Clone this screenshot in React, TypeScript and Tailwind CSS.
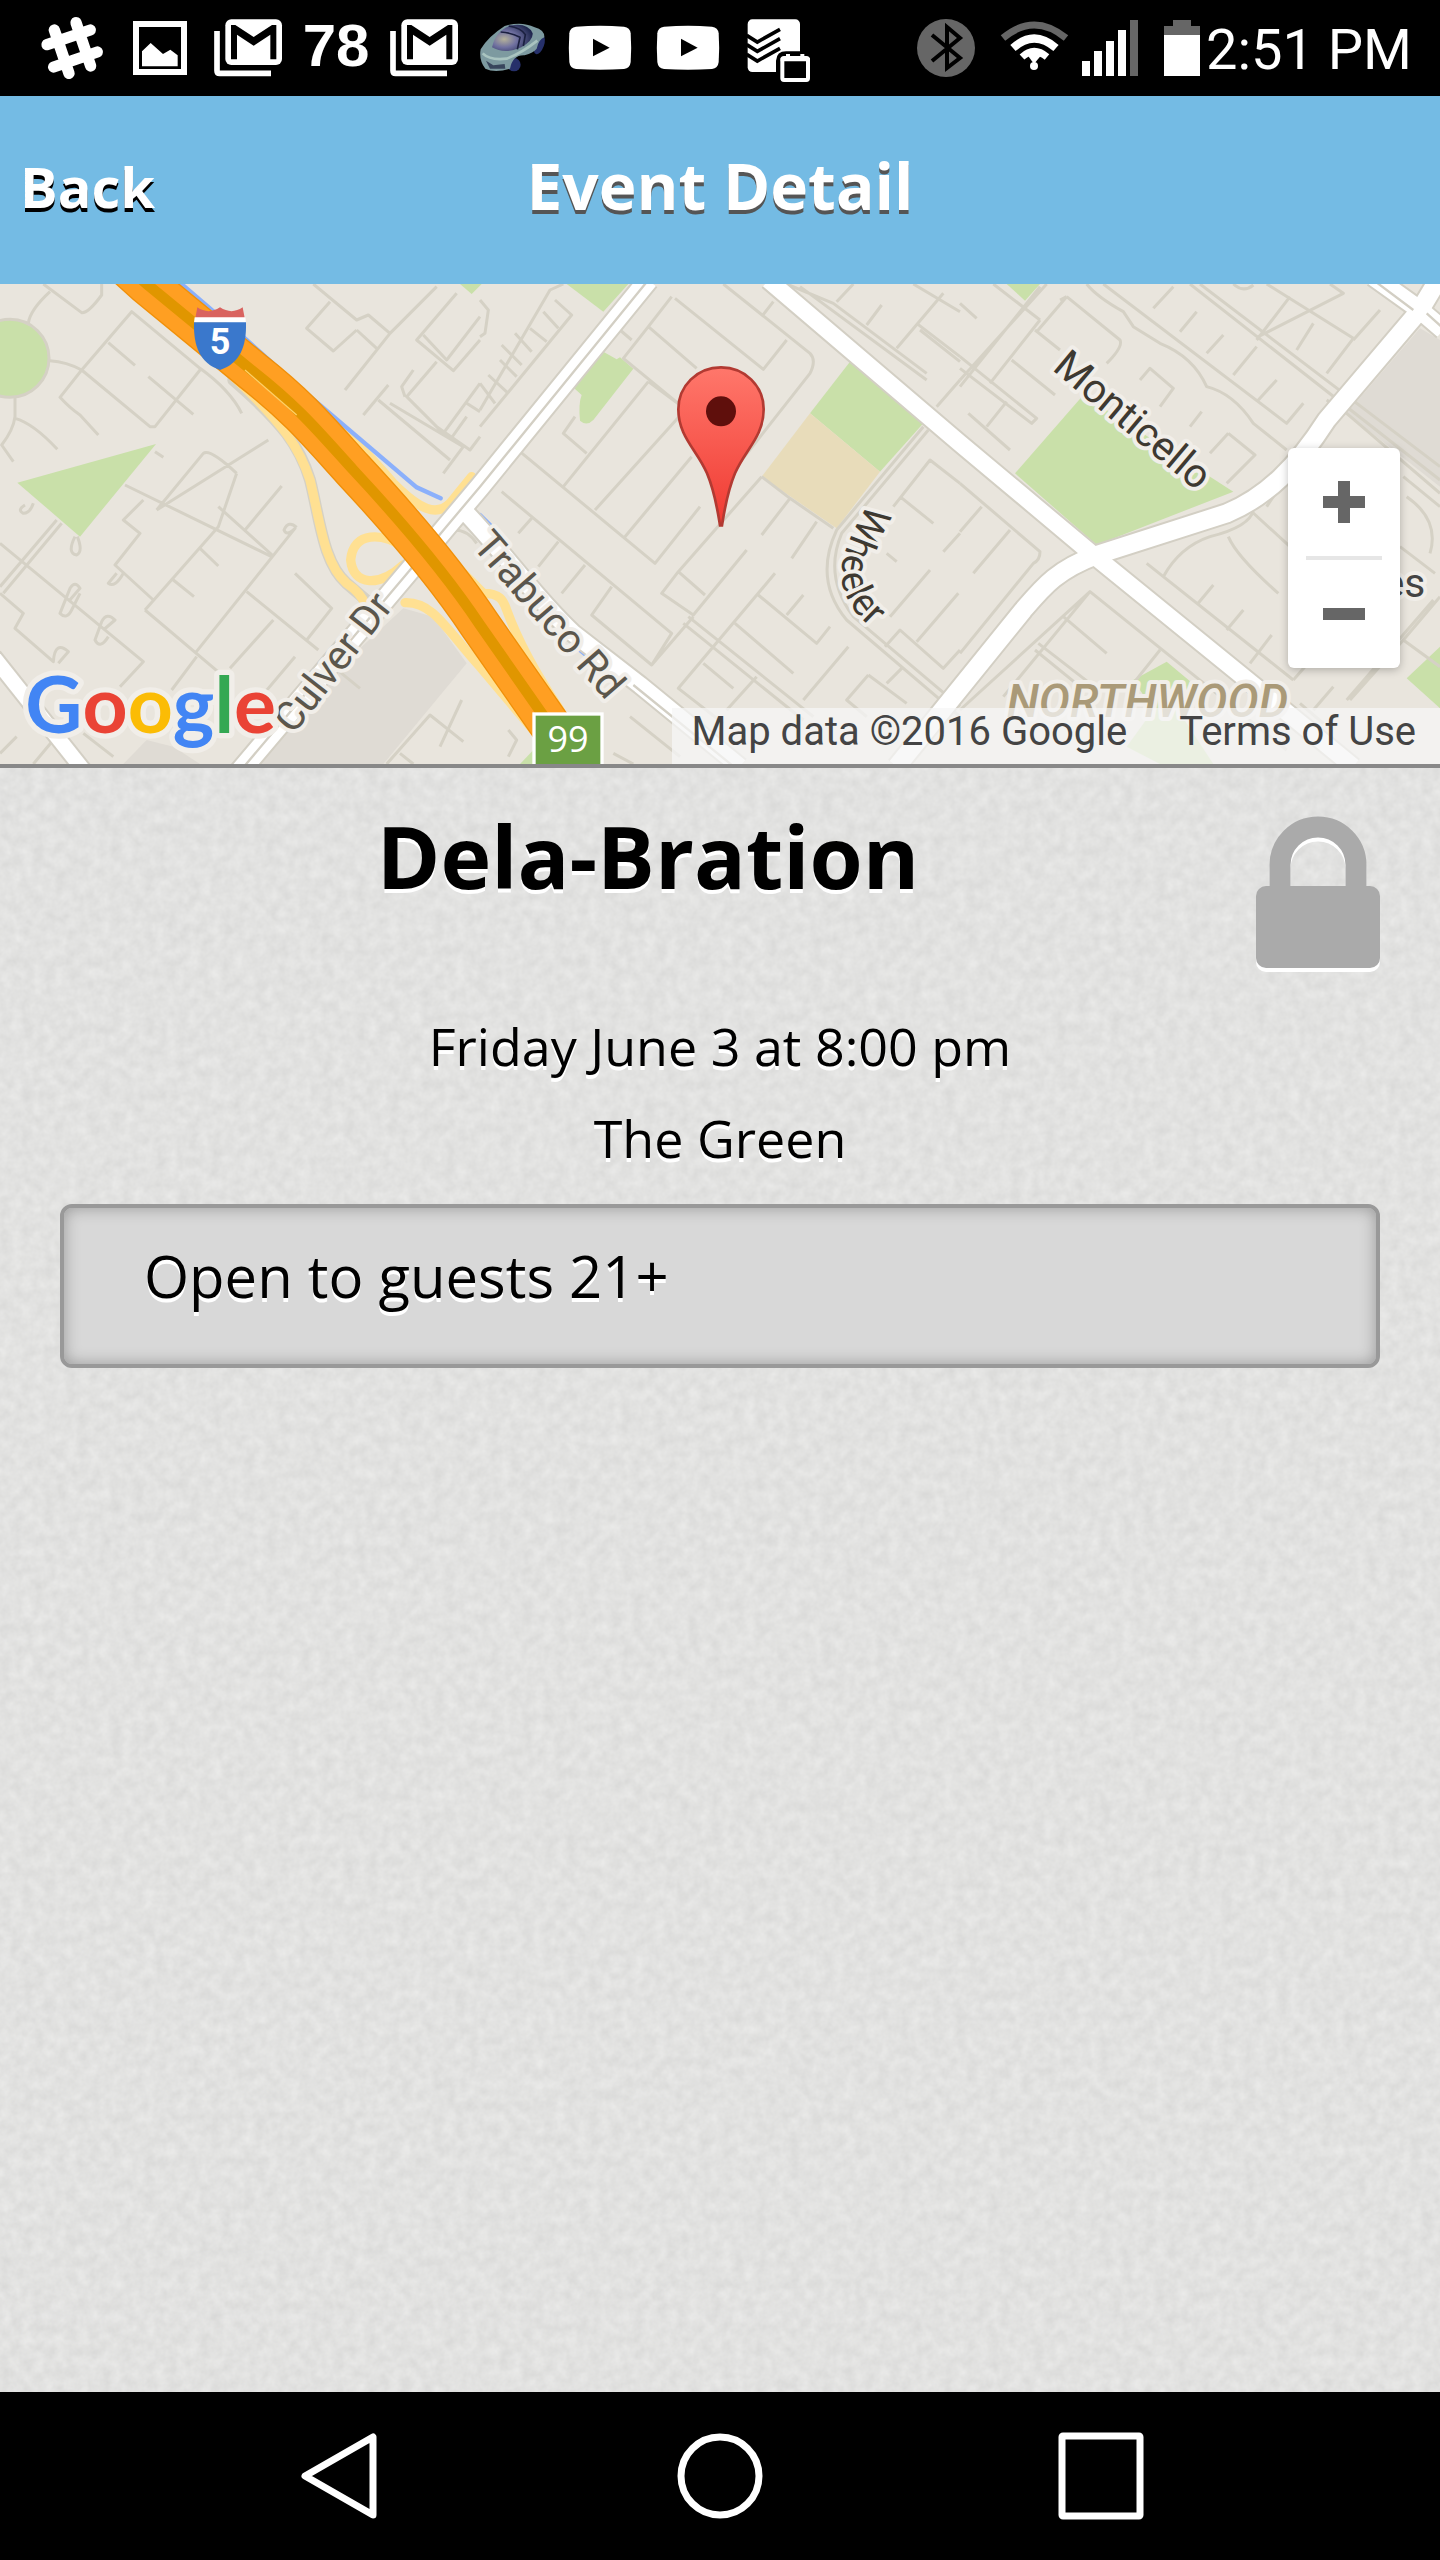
import React from "react";

const GmailIcon = () => (
  <svg viewBox="0 0 264 288" className="h-24 w-[88px]" aria-hidden="true">
    <path d="M39 93V212Q39 220 47 220H201" fill="none" stroke="#fff" strokeWidth="17" />
    <rect x="64" y="58" width="170" height="137" rx="18" fill="#fff" />
    <path
      d="M81 75H94L149 111L204 75H217V178H199V104L149 137L99 104V178H81Z"
      fill="#000"
    />
  </svg>
);

const YoutubeIcon = () => (
  <svg viewBox="0 0 264 288" className="h-24 w-[88px]" aria-hidden="true">
    <path
      d="M60 80Q132 74 204 80Q222 82 224 100Q227 143 224 186Q222 205 204 207Q132 211 60 207Q42 205 40 186Q37 143 40 100Q42 82 60 80Z"
      fill="#fff"
    />
    <path d="M111 116L161 143L111 169Z" fill="#000" />
  </svg>
);

const CarIcon = () => (
  <svg viewBox="0 0 264 288" className="h-24 w-[88px]" aria-hidden="true">
    <defs>
      <radialGradient id="glass" cx="0.3" cy="0.55" r="0.7">
        <stop offset="0" stopColor="#b5b29a" />
        <stop offset="0.45" stopColor="#6f70a0" />
        <stop offset="1" stopColor="#20274f" />
      </radialGradient>
    </defs>
    <ellipse cx="138" cy="194" rx="20" ry="20" fill="#26306a" />
    <ellipse cx="214" cy="134" rx="14" ry="30" fill="#26306a" transform="rotate(20 214 134)" />
    <path
      d="M38 148Q60 110 110 78Q160 62 200 82Q230 90 229 112Q212 118 206 146Q196 158 170 166Q134 164 126 206Q80 220 52 206Q32 180 38 148Z"
      fill="#7d9aa0"
    />
    <path d="M44 160Q66 182 116 176Q160 160 208 122" fill="none" stroke="#a9c4c0" strokeWidth="8" />
    <path d="M72 142Q84 90 130 76Q180 68 194 100Q196 122 160 142Q110 164 72 142Z" fill="url(#glass)" />
    <path d="M98 96Q130 98 156 112L148 148M122 78Q160 84 172 104L166 138" fill="none" stroke="#1b2040" strokeWidth="5" />
    <path d="M54 182L76 196L110 192L112 206L66 206Z" fill="#38455c" />
  </svg>
);

const StatusBar = () => (
  <div className="flex h-24 items-center justify-between bg-black pr-7 pl-7 text-white">
    <div className="flex items-center">
      <svg viewBox="0 0 264 288" className="h-24 w-[88px]" aria-hidden="true">
        <path
          d="M79 90L123 220M144 68L188 198M57 134L187 90M77 201L208 156"
          stroke="#fff"
          strokeWidth="34"
          strokeLinecap="round"
        />
      </svg>
      <svg viewBox="0 0 264 288" className="h-24 w-[88px]" aria-hidden="true">
        <rect x="60" y="72" width="144" height="144" fill="none" stroke="#fff" strokeWidth="18" />
        <path d="M78 199V154L104 129L141 162L163 149L185 166V199Z" fill="#fff" />
      </svg>
      <GmailIcon />
      <span className="w-[88px] pb-1 text-center font-['Liberation_Sans'] text-[60px] leading-none font-bold">
        78
      </span>
      <GmailIcon />
      <CarIcon />
      <YoutubeIcon />
      <YoutubeIcon />
      <svg viewBox="0 0 264 288" className="h-24 w-[88px]" aria-hidden="true">
        <rect x="47" y="58" width="157" height="158" rx="14" fill="#fff" />
        <path
          d="M44 106L76 126L144 88M44 134L76 154L144 116M44 163L76 183L144 145"
          fill="none"
          stroke="#000"
          strokeWidth="11"
        />
        <path d="M132 258V182Q134 154 162 154H252V258Z" fill="#000" />
        <rect x="151" y="174" width="77" height="66" rx="5" fill="none" stroke="#fff" strokeWidth="12" />
        <path d="M146 174H234V184H146ZM162 162H174V172H162ZM205 162H217V172H205Z" fill="#fff" />
      </svg>
    </div>

    <div className="flex items-center">
      <svg viewBox="0 0 88 96" className="h-24 w-[88px]" aria-hidden="true">
        <circle cx="44" cy="48" r="29" fill="#666" />
        <path d="M30 35L58 58L45 68V27L58 38L30 61" fill="none" stroke="#000" strokeWidth="4" />
      </svg>
      <svg viewBox="0 0 88 96" className="h-24 w-[88px]" aria-hidden="true">
        <path d="M13 38Q44 12 76 38" fill="none" stroke="#666" strokeWidth="7" />
        <path d="M23 48Q44 29 66 48" fill="none" stroke="#fff" strokeWidth="8" />
        <path d="M32 57Q44 46 57 57" fill="none" stroke="#fff" strokeWidth="7" />
        <path d="M36 53L44 64L53 53Z" fill="#fff" />
        <circle cx="44" cy="66" r="4" fill="#fff" />
      </svg>
      <svg viewBox="0 0 64 96" className="h-24 w-16" aria-hidden="true">
        <path d="M4 61h8v15h-8zM16 51h8v25h-8zM28 41h8v35h-8zM40 30h8v46h-8z" fill="#fff" />
        <path d="M52 20h8v56h-8z" fill="#666" />
      </svg>
      <svg viewBox="0 0 64 96" className="h-24 w-16" aria-hidden="true">
        <path d="M31 20H49V26H58V36H22V26H31Z" fill="#666" />
        <path d="M22 35H58V76H22Z" fill="#fff" />
      </svg>
      <span className="pt-1 font-[Roboto] text-[56px] leading-none">2:51 PM</span>
    </div>
  </div>
);

const Header = () => (
  <header className="grid h-[188px] grid-cols-[1fr_auto_1fr] items-center bg-[#74bbe4] px-5 pb-2 font-['Open_Sans'] font-bold text-white">
    <button type="button" className="justify-self-start text-[56px] text-shadow-[0_4px_0_#000]">
      Back
    </button>
    <h1 className="text-[64px] text-shadow-[0_4px_0_#555]">Event Detail</h1>
  </header>
);

const MapDrawing = () => (
  <svg
    viewBox="0 12 4320 1440"
    preserveAspectRatio="xMidYMid slice"
    className="block h-[480px] w-full bg-[#e9e5dd]"
    role="img"
    aria-label="Map of the event location"
  >
    <defs>
      <linearGradient id="pin" x1="0" y1="0" x2="0" y2="1">
        <stop offset="0" stopColor="#ff776b" />
        <stop offset="1" stopColor="#f03a32" />
      </linearGradient>
      <path id="wheeler" d="M2606 670C2510 830 2500 910 2570 1000C2600 1035 2640 1070 2700 1110" />
    </defs>

    {/* blocks and parks */}
    <g fill="#dfdbd4">
      <path d="M1210 985L1300 1010L1400 1150L1150 1452H770L1010 1170Z" />
      <path d="M440 1380L520 1400L600 1452H370Z" />
      <path d="M4260 145L4320 180V620L4040 400Z" />
    </g>
    <g fill="#c9e0a9">
      <circle cx="30" cy="235" r="115" />
      <path d="M52 608L468 492L240 770Z" />
      <path d="M1380 12H1445L1415 42Z" />
      <path d="M1700 12H1885L1810 95Z" />
      <path d="M1810 215L1850 238L1860 232L1900 266L1780 420Q1760 440 1740 422Q1735 370 1745 345L1715 318Z" />
      <path d="M2550 245L2770 430L2640 575L2430 400Z" />
      <path d="M3020 12H3120L3075 62Z" />
      <path d="M3250 345L3700 635L3290 795L3045 580Z" />
      <path d="M3500 1145L3590 1220L3540 1300L3640 1452H3480L3380 1400L3460 1290L3400 1200Z" />
      <path d="M4320 1100L4220 1195L4320 1285Z" />
      <path d="M1600 1410L1560 1452H1620Z" />
    </g>
    <path d="M2430 400L2640 575L2510 745L2285 590Z" fill="#e8dcba" />

    {/* side streets */}
    <g fill="none" stroke="#d5d1c5" strokeWidth="9" strokeLinejoin="round">
      <circle cx="30" cy="235" r="117" />
      <path d="M130 12L245 98Q265 100 305 45V12M150 35Q90 90 85 130M150 242Q200 245 245 270L395 95L600 265Q690 330 725 400M325 188L405 256M245 270L180 352Q210 385 240 405L295 465M245 270L450 440H465L600 270M445 290L580 403M45 350V410Q40 450 5 495L40 545M45 415Q100 430 172 508M465 515L490 532" />
      <path d="M375 615L815 830M470 690L610 520Q630 505 710 580M470 690L805 480M655 680L820 828M735 750L845 618M430 660L370 720L420 760L345 855L460 960M75 675Q50 690 70 700Q90 700 100 670M170 720L0 920M185 730L10 940M0 790L430 1145L360 1220M225 770Q200 820 230 825Q250 815 232 770M205 965L240 925Q225 900 210 925L180 1000Q200 1020 215 990L240 940M310 1050L345 1020Q320 995 305 1025L285 1080Q300 1110 325 1070M350 880L325 910Q345 925 370 880M0 940L70 1000L45 1045L160 1145Q165 1080 205 1115L175 1150M435 990L655 740L710 580M435 990L660 1180M585 1120L885 745Q860 770 852 750Q865 720 890 742M515 1230L590 1130M520 900L582 950M600 805L655 858M740 935L955 1110M885 880L995 985L920 1080M690 1165L820 1020M1000 1160L1080 1225M750 1290L885 1130M50 1370L0 1420M100 1452L160 1380M250 1360L340 1430" />
      <path d="M940 12L1070 120L1105 105L1170 160L1310 20M990 65L920 145L1000 213L1070 150M1070 150L1130 205M1170 160L1035 330M1370 40L1250 180L1360 272L1440 180M1270 165L1340 240L1440 110M1310 245L1220 350L1330 460L1440 310M1165 315L1090 405M1135 360L1350 540M1170 370L1390 500L1330 580M1240 270L1205 320L1215 350M1400 370L1440 395M1310 440L1410 510L1440 470M1350 480L1400 410M1160 1452L1290 1305L1390 1385M1385 1260L1320 1400M1200 1420L1240 1452M1320 760Q1390 730 1430 790" />
    </g>
    <g fill="none" stroke="#d5d1c5" strokeWidth="9" strokeLinejoin="round" transform="translate(1440)">
      <path d="M0 60L25 90L15 160L0 170M0 390L210 30L250 12M225 60L275 105L0 440M190 95L235 145M150 145L200 185M105 160L155 215M65 195L125 255M60 240L110 290M25 285L85 340M0 310L45 370" />
      <path d="M575 50L505 140L650 265M585 55L850 268L920 180M730 12L990 220Q1010 240 990 280L770 560M845 110L880 65M420 150L455 180M505 140L430 235L600 375M505 305L250 620M505 305L600 375M635 530L435 770M620 385L345 690M120 515L525 850L660 680M65 635L575 1060L515 1155L335 1005L395 920M285 410L250 460L320 520M155 715L115 760M235 785L175 860M315 855L245 940M845 590L595 875L545 940L640 1005L800 810M595 875L675 945M640 1010L515 1155M845 590L930 655L845 765M930 655L1060 745M1010 725L935 835" />
      <path d="M885 880L595 1225L730 1330M835 945L1010 1090L1050 1040M970 945L920 1005M765 1030L940 1180M670 1150L760 1225M625 1010L1000 1310M610 1030L970 1320M830 1190L740 1290M1105 1100L970 1260M1330 440L1070 750Q1000 900 1100 1020L1440 1310M1345 450L1085 760Q1030 890 1120 1010L1440 1280M1215 1100L1260 1050L1390 1165L1440 1110M1265 1165L1220 1210M1310 1085L1435 940M1440 610L1350 540L1240 680M1260 650L1360 730M1220 820L1250 845M1350 870L1230 1010M1440 760L1390 815M1165 1185L1100 1260L1160 1310M1165 1185L1280 1270" />
      <path d="M960 20L1340 300M920 12L1060 70L1340 280M1070 65L1120 12M1205 75L1160 135M1390 40L1250 205M1310 130L1440 230M1320 150L1440 245M1300 12L1440 95M1370 380L1440 300M85 1350L110 1380L85 1430M400 1420L460 1452M450 1310L600 1430" />
    </g>
    <g fill="none" stroke="#d5d1c5" strokeWidth="9" strokeLinejoin="round" transform="translate(2880)">
      <path d="M100 12L240 120M240 20L0 320M260 12L0 300M0 230L230 415L215 430L0 265M225 150L300 210M240 120L90 310M320 50L230 155M320 50L480 180Q490 200 440 250M320 50L300 60M155 240L285 345M140 365L80 440M25 400L150 510M0 70L50 115M380 12Q410 50 490 95L520 140L600 190Q700 230 740 320Q820 340 880 430L980 510M430 12L980 430L1030 370M710 95L660 155M790 165L740 220M890 200L820 285M950 300L895 360M580 85L640 20M690 12L1440 600M720 12L1440 560M820 12Q850 40 880 15M1110 12L1150 40L895 170M920 12L1180 175L1100 280M990 50L890 180M1260 90L1180 180M1060 130L1010 210M1100 360L1160 400L1440 640M540 300L570 265L640 325L600 380M725 395L690 440M805 460L750 520M805 460L885 525L800 610" />
      <path d="M0 610L240 815Q240 840 220 850L0 1120M65 680L0 755M150 750L40 880M0 1290L390 935L980 1410M390 935L130 1250M310 1010L440 1120M235 1090L390 1210M225 1110L360 1220M600 1110L520 1210M560 850L1000 1200M1000 1200L1140 1040M760 915L710 975M850 990L800 1050M935 1065L870 1150M880 690Q870 740 750 770Q660 800 610 890M805 770Q830 830 955 940M870 690L990 800M1330 590L1440 680M1340 650Q1440 720 1410 820M1320 800L1425 880M1440 950L1330 1080L1440 1160M1420 960L1160 1260M1330 1080L1170 1260M1120 1220L1060 1290M1020 1270L1090 1330M960 620L920 680" />
    </g>

    {/* ramps, canal */}
    <g fill="none" strokeLinecap="round">
      <g stroke="#d5d1c5" strokeWidth="36">
        <path d="M700 300C850 430 900 500 930 600C960 720 970 850 1040 910L1110 970" />
      </g>
      <g stroke="#ffe092" strokeWidth="28">
        <path d="M700 290C860 440 900 510 930 600C960 720 970 850 1040 910C1100 950 1110 990 1095 1060" />
        <path d="M1210 800C1150 760 1060 750 1052 840C1060 920 1140 920 1210 855" />
        <path d="M1215 968C1300 965 1340 1050 1440 1160L1600 1350" />
        <path d="M900 340C1050 460 1130 550 1180 610C1260 690 1310 710 1350 670L1415 590" />
        <path d="M1300 790L1450 940C1500 940 1510 960 1520 990C1560 1100 1620 1200 1680 1290" />
      </g>
      <path
        d="M540 8L740 180L940 358L1250 622L1322 655M1440 705L1480 745M1535 820L1620 940M1740 1110L1770 1135"
        stroke="#8bb0fb"
        strokeWidth="13"
      />
    </g>

    {/* main roads */}
    <g fill="none" stroke="#d3cfc4" strokeLinejoin="round">
      <path d="M-20 1130L250 1470" strokeWidth="56" />
      <path d="M715 1480L1230 870L1440 620L1945 0" strokeWidth="70" />
      <path d="M1380 680C1500 800 1600 950 1720 1060L1920 1215L2220 1460" strokeWidth="62" />
      <path d="M2305 0L2880 490L3280 825L3760 1215L4060 1460" strokeWidth="62" />
      <path d="M4320 -10L4260 90L3980 420C3890 560 3800 650 3680 700L3290 825C3170 870 3130 920 3070 990L2690 1460" strokeWidth="66" />
      <path d="M4120 -10L4260 90L4330 150" strokeWidth="66" />
    </g>
    <g fill="none" stroke="#fff" strokeLinejoin="round">
      <path d="M-20 1130L250 1470" strokeWidth="44" />
      <path d="M715 1480L1230 870L1440 620L1945 0" strokeWidth="58" />
      <path d="M1380 680C1500 800 1600 950 1720 1060L1920 1215L2220 1460" strokeWidth="50" />
      <path d="M2305 0L2880 490L3280 825L3760 1215L4060 1460" strokeWidth="50" />
      <path d="M4320 -10L4260 90L3980 420C3890 560 3800 650 3680 700L3290 825C3170 870 3130 920 3070 990L2690 1460" strokeWidth="54" />
      <path d="M4120 -10L4260 90L4330 150" strokeWidth="54" />
    </g>
    <path
      d="M715 1480L1230 870L1440 620L1945 0M1900 1215L2220 1475M4120 0L4240 90M4280 100L4330 145"
      fill="none"
      stroke="#d3cfc4"
      strokeWidth="7"
    />

    {/* freeway */}
    <g fill="none">
      <path d="M360 -60L440 12L760 275C900 385 960 460 1060 570C1200 720 1330 870 1440 1035L1730 1450" stroke="#f0900a" strokeWidth="126" />
      <path d="M360 -60L440 12L760 275C900 385 960 460 1060 570C1200 720 1330 870 1440 1035L1730 1450" stroke="#ff9f22" strokeWidth="118" />
      <path d="M360 -60L440 12L760 275C900 385 960 460 1060 570C1200 720 1330 870 1440 1035L1730 1450" stroke="#e09600" strokeWidth="32" />
      <path d="M735 270L890 405" stroke="#ffcf66" strokeWidth="4" />
    </g>

    {/* shields */}
    <path d="M592 82Q625 105 660 82Q695 105 728 82L734 114H586Z" fill="#d9635f" />
    <path d="M584 112H736L738 128H582Z" fill="#fff" />
    <path d="M582 127H738C740 200 720 250 660 270C600 250 580 200 582 127Z" fill="#3a78cc" />
    <text x="660" y="223" textAnchor="middle" fontSize="108" fontWeight="700" fill="#fff" fontFamily="Roboto">
      5
    </text>
    <rect x="1602" y="1302" width="204" height="160" fill="#6ba043" stroke="#fff" strokeWidth="10" />
    <text x="1704" y="1416" textAnchor="middle" fontSize="108" fill="#fff" fontFamily="Open Sans">
      99
    </text>

    {/* street names */}
    <g
      fontFamily="Roboto"
      fontSize="122"
      fill="#5b564c"
      stroke="#f1eee9"
      strokeWidth="24"
      strokeLinejoin="round"
      paintOrder="stroke"
    >
      <text transform="translate(880 1366) rotate(-52)">Culver Dr</text>
      <text transform="translate(1414 798) rotate(49)">Trabuco Rd</text>
      <text transform="translate(3154 268) rotate(40)" fill="#3e3931">
        Monticello
      </text>
      <text fill="#3e3931" fontSize="116">
        <textPath href="#wheeler">Wheeler</textPath>
      </text>
      <text x="4148" y="952" fill="#444">
        es
      </text>
      <text x="3020" y="1310" fill="#aa9a78" fontStyle="italic" fontWeight="500" fontSize="140">
        NORTHWOOD
      </text>
    </g>

    {/* pin */}
    <path
      d="M2163 262C2235 262 2291 318 2291 388C2291 470 2235 510 2205 580C2180 640 2172 700 2166 736H2160C2154 700 2146 640 2121 580C2091 510 2035 470 2035 388C2035 318 2091 262 2163 262Z"
      fill="url(#pin)"
      stroke="#b23a32"
      strokeWidth="8"
    />
    <circle cx="2163" cy="394" r="45" fill="#5f0f0c" />

    <text
      x="76"
      y="1360"
      fontFamily="Lato"
      fontSize="236"
      fontWeight="700"
      stroke="#f1eee9"
      strokeWidth="32"
      strokeLinejoin="round"
      paintOrder="stroke"
    >
      <tspan fill="#4285f4">G</tspan>
      <tspan fill="#ea4335">o</tspan>
      <tspan fill="#fbbc05">o</tspan>
      <tspan fill="#4285f4">g</tspan>
      <tspan fill="#34a853">l</tspan>
      <tspan fill="#ea4335">e</tspan>
    </text>
  </svg>
);

const EventMap = () => (
  <section className="relative overflow-hidden border-b-4 border-[#888]">
    <MapDrawing />
    <div className="absolute top-[164px] right-10 flex h-[220px] w-28 flex-col items-center rounded-md bg-white shadow-[0_2px_8px_rgba(0,0,0,0.25)]">
      <button type="button" aria-label="Zoom in" className="flex w-full flex-1 items-center justify-center">
        <svg viewBox="0 0 42 42" className="size-[42px]">
          <path d="M21 0V42M0 21H42" stroke="#666" strokeWidth="12" />
        </svg>
      </button>
      <div className="h-1 w-[76px] bg-[#e6e6e6]" />
      <button type="button" aria-label="Zoom out" className="flex w-full flex-1 items-center justify-center">
        <svg viewBox="0 0 42 42" className="size-[42px]">
          <path d="M0 21H42" stroke="#666" strokeWidth="12" />
        </svg>
      </button>
    </div>
    <div className="absolute right-0 bottom-0 flex h-14 items-center gap-[52px] bg-[#f5f5f5]/75 pr-6 pb-2 pl-5 font-[Roboto] text-[40px] leading-none text-[#444]">
      <span>Map data ©2016 Google</span>
      <a href="#terms">Terms of Use</a>
    </div>
  </section>
);

const PaperTexture = () => (
  <svg className="absolute inset-0 -z-10 size-full" aria-hidden="true">
    <filter id="paper" x="0" y="0" width="100%" height="100%" colorInterpolationFilters="sRGB">
      <feTurbulence type="fractalNoise" baseFrequency="0.09" numOctaves="3" seed="4" />
      <feColorMatrix values="0.08 0 0 0 0.845  0.08 0 0 0 0.845  0.08 0 0 0 0.84  0 0 0 0 1" />
    </filter>
    <rect width="100%" height="100%" filter="url(#paper)" />
  </svg>
);

const LockIcon = () => (
  <svg viewBox="0 0 124 156" className="h-[156px] w-[124px]" role="img" aria-label="Private event">
    {["#fff", "#aaa"].map((color, i) => (
      <g key={color} transform={i === 0 ? "translate(0 4)" : undefined}>
        <path d="M24 75V49A38 38 0 0 1 100 49V75" fill="none" stroke={color} strokeWidth="21" />
        <rect x="0" y="70" width="124" height="82" rx="10" fill={color} />
      </g>
    ))}
  </svg>
);

const EventDetails = () => (
  <main className="relative isolate flex-1 bg-[#e2e2e1] px-[60px] pt-12 font-['Open_Sans'] text-black text-shadow-[0_4px_0_#fff]">
    <PaperTexture />
    <div className="flex items-start">
      <h2 className="flex-1 pr-5 text-center text-[86px] leading-[80px] font-bold">Dela-Bration</h2>
      <LockIcon />
    </div>
    <div className="mt-7 text-center text-[52px] leading-[92px]">
      <p>Friday June 3 at 8:00 pm</p>
      <p>The Green</p>
    </div>
    <div className="mt-5 h-[164px] rounded-xl border-4 border-[#999] bg-[#d8d8d8] px-20 pt-7 shadow-[inset_0_0_16px_rgba(0,0,0,0.3)]">
      <p className="text-[58px] leading-[80px]">Open to guests 21+</p>
    </div>
  </main>
);

const NavBar = () => (
  <nav className="flex h-[168px] items-center justify-center gap-[295px] bg-black">
    <button type="button" aria-label="Back">
      <svg viewBox="0 0 86 88" className="h-[88px] w-[86px]" fill="none" stroke="#fff" strokeWidth="7" strokeLinejoin="round">
        <path d="M77 5V83L9 44Z" />
      </svg>
    </button>
    <button type="button" aria-label="Home">
      <svg viewBox="0 0 86 88" className="h-[88px] w-[86px]" fill="none" stroke="#fff" strokeWidth="7">
        <circle cx="43" cy="44" r="39" />
      </svg>
    </button>
    <button type="button" aria-label="Recent apps">
      <svg viewBox="0 0 86 88" className="h-[88px] w-[86px]" fill="none" stroke="#fff" strokeWidth="7">
        <rect x="4" y="4" width="78" height="80" rx="1" />
      </svg>
    </button>
  </nav>
);

export default function App() {
  return (
    <div className="flex min-h-screen flex-col">
      <StatusBar />
      <Header />
      <EventMap />
      <EventDetails />
      <NavBar />
    </div>
  );
}
